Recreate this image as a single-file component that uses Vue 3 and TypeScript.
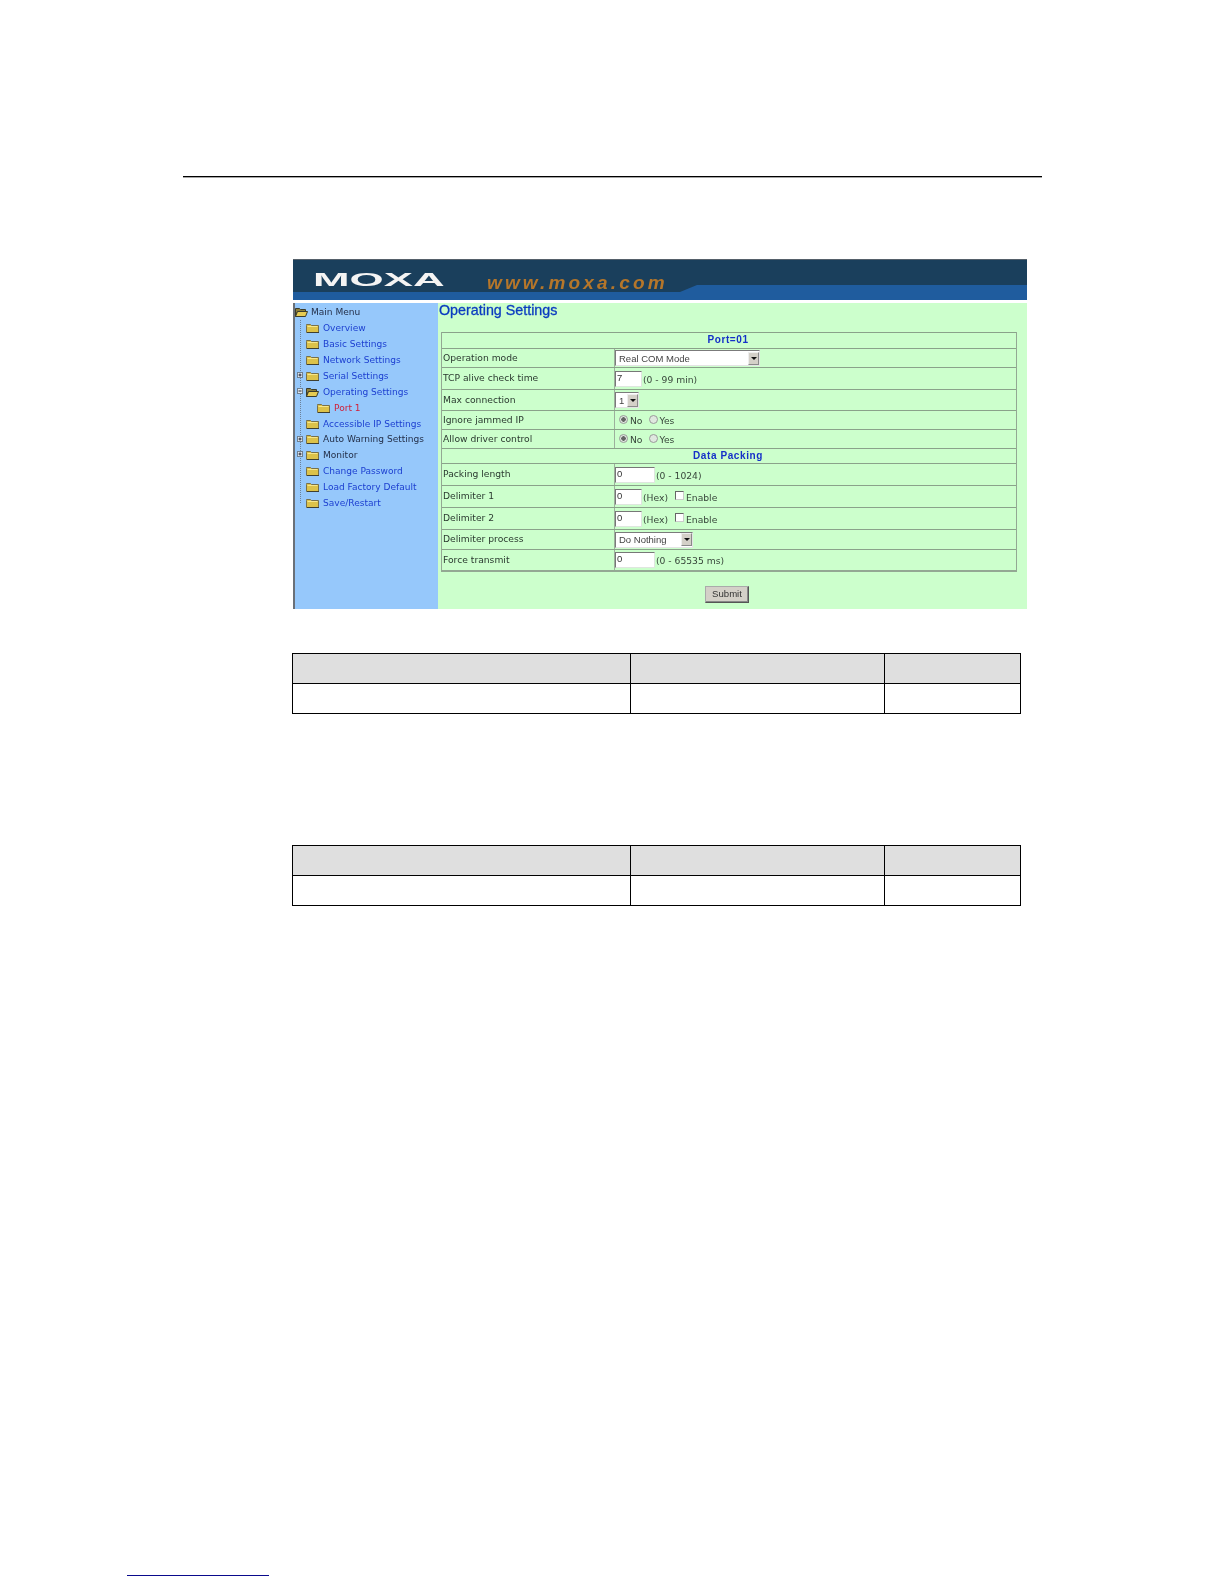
<template>
  <div class="page">
    <div class="top-rule"></div>

    <div class="shot">
      <div class="banner">
        <svg class="banner-bg" viewBox="0 0 734 41" preserveAspectRatio="none">
          <rect width="734" height="41" fill="#1f5c9e" />
          <polygon points="0,0 734,0 734,26 404,26 387,33 0,33" fill="#1a3f5c" />
          <rect width="734" height="1" fill="#55606a" />
        </svg>
        <span class="logo">MOXA</span>
        <span class="site-url">www.moxa.com</span>
      </div>

      <div class="shot-body">
        <nav class="side-nav">
          <div class="tree-line"></div>
          <div
            v-for="item in navItems"
            :key="item.label"
            class="nav-row"
            :class="`level-${item.level}`"
          >
            <svg v-if="item.toggle" class="toggle" viewBox="0 0 6 6">
              <rect x="0.5" y="0.5" width="5" height="5" fill="#dfe8f0" stroke="#6f7f8f" />
              <path :d="item.toggle === 'plus' ? 'M1.5 3h3M3 1.5v3' : 'M1.5 3h3'" stroke="#223" fill="none" />
            </svg>
            <svg class="folder" viewBox="0 0 13 10">
              <template v-if="item.open">
                <path d="M.5 1.5h4l1 1h5v2h-8l-2 5z" fill="#8d7f3a" stroke="#3a3a2a" />
                <path d="M2.5 4.5h10l-2 5h-10z" fill="#e6cb52" stroke="#3a3a2a" />
              </template>
              <template v-else>
                <path d="M.5 2.5V1.5h4l1 1h7v7H.5z" fill="#dcc24a" stroke="#77704a" />
                <path d="M1.5 3.5h10" stroke="#f6e68c" />
                <path d="M1 9.5h12" stroke="#3f3f30" />
              </template>
            </svg>
            <span class="nav-label" :class="item.tone">{{ item.label }}</span>
          </div>
        </nav>

        <main class="content">
          <h1 class="title">Operating Settings</h1>

          <div class="settings">
            <div
              v-for="row in rows"
              :key="row.label"
              class="set-row"
              :class="{ heading: row.kind === 'heading' }"
              :style="{ height: row.height + 'px' }"
            >
              <span v-if="row.kind === 'heading'" class="heading-text">{{ row.label }}</span>
              <template v-else>
                <div class="set-label">{{ row.label }}</div>
                <div class="set-value">
                  <div v-if="row.kind === 'select'" class="fake-select" :style="{ width: row.width + 'px' }">
                    <span class="select-text">{{ row.value }}</span>
                    <span class="select-btn"><i class="arrow"></i></span>
                  </div>
                  <div v-if="row.kind === 'input' || row.kind === 'check'" class="fake-input" :style="{ width: row.width + 'px' }">{{ row.value }}</div>
                  <span v-if="row.note" class="note">{{ row.note }}</span>
                  <template v-if="row.kind === 'check'">
                    <span class="check"></span>
                    <span class="note enable">Enable</span>
                  </template>
                  <template v-if="row.kind === 'radio'">
                    <span class="radio on"></span><span class="note radio-text">No</span>
                    <span class="radio second"></span><span class="note radio-text">Yes</span>
                  </template>
                </div>
              </template>
            </div>
          </div>

          <div class="submit-wrap">
            <div class="submit">Submit</div>
          </div>
        </main>
      </div>
    </div>

    <div class="spec-table first">
      <div v-for="n in 3" :key="'a' + n" class="spec-head"></div>
      <div v-for="n in 3" :key="'b' + n" class="spec-cell"></div>
    </div>

    <div class="spec-table second-table">
      <div v-for="n in 3" :key="'c' + n" class="spec-head"></div>
      <div v-for="n in 3" :key="'d' + n" class="spec-cell"></div>
    </div>

    <div class="foot-link"></div>
  </div>
</template>

<script setup lang="ts">
interface NavItem {
  label: string
  level: number
  tone: 'link' | 'plain' | 'current'
  open?: boolean
  toggle?: 'plus' | 'minus'
}

interface SettingRow {
  label: string
  kind: 'heading' | 'select' | 'input' | 'radio' | 'check'
  height: number
  value?: string
  width?: number
  note?: string
}

const navItems: NavItem[] = [
  { label: 'Main Menu', level: 0, tone: 'plain', open: true },
  { label: 'Overview', level: 1, tone: 'link' },
  { label: 'Basic Settings', level: 1, tone: 'link' },
  { label: 'Network Settings', level: 1, tone: 'link' },
  { label: 'Serial Settings', level: 1, tone: 'link', toggle: 'plus' },
  { label: 'Operating Settings', level: 1, tone: 'link', open: true, toggle: 'minus' },
  { label: 'Port 1', level: 2, tone: 'current' },
  { label: 'Accessible IP Settings', level: 1, tone: 'link' },
  { label: 'Auto Warning Settings', level: 1, tone: 'plain', toggle: 'plus' },
  { label: 'Monitor', level: 1, tone: 'plain', toggle: 'plus' },
  { label: 'Change Password', level: 1, tone: 'link' },
  { label: 'Load Factory Default', level: 1, tone: 'link' },
  { label: 'Save/Restart', level: 1, tone: 'link' }
]

const rows: SettingRow[] = [
  { label: 'Port=01', kind: 'heading', height: 16 },
  { label: 'Operation mode', kind: 'select', height: 19, value: 'Real COM Mode', width: 145 },
  { label: 'TCP alive check time', kind: 'input', height: 22, value: '7', width: 27, note: '(0 - 99 min)' },
  { label: 'Max connection', kind: 'select', height: 21, value: '1', width: 24 },
  { label: 'Ignore jammed IP', kind: 'radio', height: 19 },
  { label: 'Allow driver control', kind: 'radio', height: 19 },
  { label: 'Data Packing', kind: 'heading', height: 15 },
  { label: 'Packing length', kind: 'input', height: 22, value: '0', width: 40, note: '(0 - 1024)' },
  { label: 'Delimiter 1', kind: 'check', height: 22, value: '0', width: 27, note: '(Hex)' },
  { label: 'Delimiter 2', kind: 'check', height: 22, value: '0', width: 27, note: '(Hex)' },
  { label: 'Delimiter process', kind: 'select', height: 20, value: 'Do Nothing', width: 78 },
  { label: 'Force transmit', kind: 'input', height: 21, value: '0', width: 40, note: '(0 - 65535 ms)' }
]
</script>

<style>
html,
body {
  margin: 0;
  background: #fff;
}
</style>

<style scoped>
.page {
  width: 1224px;
  height: 1584px;
  overflow: hidden;
  font-family: "Liberation Sans", Arial, sans-serif;
}

.top-rule {
  width: 859px;
  height: 1px;
  margin: 176px 0 0 183px;
  background: #000;
  box-shadow: 0 1px 0 rgba(0, 0, 0, 0.35);
}

.shot {
  width: 734px;
  margin: 82px 0 0 293px;
  filter: blur(0.4px);
}

.banner {
  position: relative;
  height: 41px;
  overflow: hidden;
  display: flex;
  align-items: center;
}

.banner-bg {
  position: absolute;
  inset: 0;
  width: 100%;
  height: 100%;
}

.logo {
  position: relative;
  top: 1px;
  width: 194px;
  margin-left: 20px;
  transform: scaleX(2.36);
  transform-origin: left center;
  font-size: 18.6px;
  line-height: 1;
  font-weight: 700;
  color: #f4f4f4;
}

.site-url {
  position: relative;
  top: 3px;
  margin-left: -20px;
  font-size: 19px;
  font-style: italic;
  font-weight: 700;
  letter-spacing: 3.15px;
  color: #b5762a;
}

.shot-body {
  display: flex;
  height: 306px;
  margin-top: 3px;
}

.side-nav {
  position: relative;
  width: 143px;
  flex-shrink: 0;
  padding-top: 1.5px;
  background: #96c8fb;
  border-left: 2px solid #6a7078;
}

.tree-line {
  position: absolute;
  left: 5px;
  top: 17px;
  height: 183px;
  border-left: 1px dotted #6b8199;
}

.nav-row {
  display: flex;
  align-items: center;
  position: relative;
  height: 15.88px;
}

.level-1 {
  padding-left: 11px;
}

.level-2 {
  padding-left: 22px;
}

.level-0 .folder {
  margin-right: 3px;
}

.toggle {
  position: absolute;
  left: 2px;
  top: 4px;
  width: 6px;
  height: 6px;
}

.folder {
  width: 13px;
  height: 10px;
  flex-shrink: 0;
  margin-right: 4px;
}

.nav-label {
  font-family: "DejaVu Sans", sans-serif;
  font-size: 9.05px;
  white-space: nowrap;
}

.link {
  color: #1c3fd0;
}

.plain {
  color: #24304a;
}

.current {
  color: #d0203a;
}

.content {
  flex: 1;
  background: #ccffcc;
  padding: 0 10px 0 3px;
}

.title {
  margin: 0 0 0 -2px;
  height: 29px;
  font-size: 14.3px;
  line-height: 14px;
  font-weight: 400;
  color: #0b3cc0;
  -webkit-text-stroke: 0.3px #0b3cc0;
}

.settings {
  border: 1px solid #93a893;
  border-top: 0;
  border-bottom-width: 2px;
}

.set-row {
  display: flex;
  box-sizing: border-box;
  border-top: 1px solid #8aa28a;
  font-family: "DejaVu Sans", sans-serif;
  font-size: 9.2px;
  color: #2b3a30;
}

.set-row.heading {
  align-items: center;
  justify-content: center;
  padding-right: 2px;
}

.heading-text {
  position: relative;
  top: -1px;
  font-family: "Liberation Sans", Arial, sans-serif;
  font-size: 10px;
  font-weight: 700;
  letter-spacing: 0.6px;
  color: #1530c8;
}

.set-label {
  position: relative;
  top: -1px;
  width: 172px;
  flex-shrink: 0;
  padding-left: 1px;
  display: flex;
  align-items: center;
  box-sizing: border-box;
}

.set-value {
  display: flex;
  align-items: center;
  flex: 1;
  border-left: 1px solid #9db09d;
}

.fake-select {
  display: flex;
  justify-content: space-between;
  align-items: center;
  height: 16px;
  box-sizing: border-box;
  padding-left: 3px;
  background: #fff;
  border: 1px solid #7b7b7b;
  border-right-color: #e4e4e4;
  border-bottom-color: #e4e4e4;
  font-family: "Liberation Sans", Arial, sans-serif;
  font-size: 9.5px;
  color: #444;
}

.select-btn {
  display: flex;
  align-items: center;
  justify-content: center;
  width: 11px;
  height: 13px;
  background: #d4d0c8;
  border: 1px solid #8a8a8a;
  border-top-color: #eee;
  border-left-color: #eee;
  box-sizing: border-box;
}

.arrow {
  border: 3px solid transparent;
  border-top-color: #111;
  border-bottom-width: 0;
}

.fake-input {
  height: 16px;
  box-sizing: border-box;
  padding-left: 1px;
  background: #fff;
  border: 1px solid #dfe6df;
  border-top-color: #777;
  border-left-color: #777;
  font-family: "Liberation Sans", Arial, sans-serif;
  font-size: 9.5px;
  line-height: 12px;
  color: #333;
}

.note {
  margin-left: 1px;
  padding-top: 1px;
  font-size: 9.2px;
  color: #37453a;
  white-space: nowrap;
}

.radio {
  width: 7px;
  height: 7px;
  border-radius: 50%;
  margin-left: 4px;
  margin-bottom: 2px;
  background: #dfe8df;
  border: 1px solid #9a9a9a;
  box-sizing: content-box;
}

.radio.on {
  background: radial-gradient(circle, #666 0 2px, #dfe8df 2.5px);
}

.radio.second {
  margin-left: 6px;
}

.radio-text {
  margin-left: 2px;
}

.check {
  width: 7px;
  height: 7px;
  margin-left: 7px;
  margin-bottom: 2px;
  background: #fff;
  border: 1px solid #666;
  border-right-color: #ccc;
  border-bottom-color: #ccc;
}

.enable {
  margin-left: 2px;
}

.submit-wrap {
  display: flex;
  justify-content: center;
  padding-right: 4px;
  margin-top: 14px;
}

.submit {
  width: 44px;
  height: 17px;
  box-sizing: border-box;
  background: #d4d0c8;
  border: 1px solid #555;
  border-top-color: #aaa;
  border-left-color: #aaa;
  box-shadow: inset -1px -1px 0 #888;
  text-align: center;
  font-size: 9.6px;
  line-height: 13px;
  color: #333;
}

.spec-table {
  display: grid;
  grid-template-columns: 338px 254px 136px;
  grid-auto-rows: 30px;
  width: 729px;
  margin-left: 292px;
  box-sizing: border-box;
  border-right: 1px solid #000;
  border-bottom: 1px solid #000;
}

.first {
  margin-top: 44px;
}

.second-table {
  margin-top: 131px;
}

.spec-head,
.spec-cell {
  box-sizing: border-box;
  border-top: 1px solid #000;
  border-left: 1px solid #000;
}

.spec-head {
  background: #dfdfdf;
}

.foot-link {
  width: 142px;
  height: 1px;
  margin: 669px 0 0 127px;
  background: #0a0a8c;
}
</style>
